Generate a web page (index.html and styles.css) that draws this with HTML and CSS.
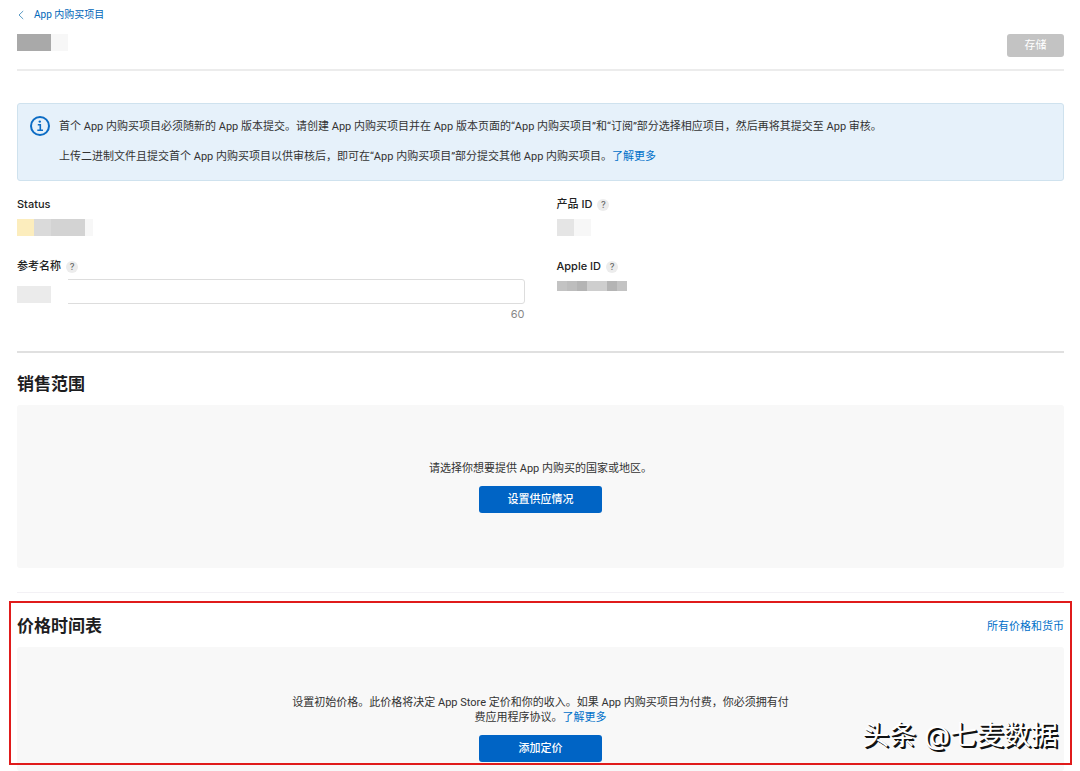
FILE: index.html
```html
<!DOCTYPE html>
<html lang="zh-CN">
  <head>
    <meta charset="UTF-8">
    <meta name="viewport" content="width=device-width, initial-scale=1">
    <title>App 内购买项目</title>
    <link rel="stylesheet" href="styles.css">
  </head>
  <body>
    <main>
      <header class="page-header">
        <a href="#" class="breadcrumb">
          <svg class="chevron" viewBox="0 0 6 10" aria-hidden="true"><path d="M5.2 1 L1 5 L5.2 9"/></svg>
          <span>App 内购买项目</span>
        </a>
        <div class="title-row">
          <div class="redacted"><i class="c-dark"></i><i class="c-dark"></i><i class="c-faint"></i></div>
          <button type="button" class="btn-save" disabled>存储</button>
        </div>
      </header>

      <div class="notice">
        <svg class="info-icon" viewBox="0 0 20 20" aria-hidden="true">
          <circle cx="10" cy="10" r="9"/>
          <circle class="dot" cx="9.8" cy="5.6" r="1.2"/>
          <path d="M7.8 8.8 H10.3 V14 M7.3 14.2 H13"/>
        </svg>
        <div class="notice-text">
          <p>首个 App 内购买项目必须随新的 App 版本提交。请创建 App 内购买项目并在 App 版本页面的“App 内购买项目”和“订阅”部分选择相应项目，然后再将其提交至 App 审核。</p>
          <p>上传二进制文件且提交首个 App 内购买项目以供审核后，即可在“App 内购买项目”部分提交其他 App 内购买项目。<a href="#">了解更多</a></p>
        </div>
      </div>

      <section class="details">
        <div class="field">
          <div class="label">Status</div>
          <div class="redacted"><i class="c-yellow"></i><i class="c-light"></i><i class="c-mid"></i><i class="c-mid"></i><i class="c-faint half"></i></div>
        </div>
        <div class="field">
          <div class="label">产品 ID <button type="button" class="help">?</button></div>
          <div class="redacted"><i class="c-pale"></i><i class="c-faint"></i></div>
        </div>
        <div class="field field-input">
          <div class="label"><label for="ref-name">参考名称</label> <button type="button" class="help">?</button></div>
          <div class="input-wrap">
            <input type="text" id="ref-name" maxlength="64">
            <div class="redacted input-redacted"><i class="c-soft"></i><i class="c-soft"></i><i class="c-white"></i></div>
          </div>
          <div class="counter">60</div>
        </div>
        <div class="field">
          <div class="label">Apple ID <button type="button" class="help">?</button></div>
          <div class="redacted small"><i class="c-gray"></i><i class="c-gray2"></i><i class="c-gray3"></i><i class="c-light2"></i><i class="c-light2"></i><i class="c-gray3"></i><i class="c-gray"></i></div>
        </div>
      </section>

      <section class="block">
        <div class="block-head">
          <h2>销售范围</h2>
        </div>
        <div class="panel">
          <p>请选择你想要提供 App 内购买的国家或地区。</p>
          <button type="button" class="btn-primary">设置供应情况</button>
        </div>
      </section>

      <section class="block pricing">
        <div class="block-head">
          <h2>价格时间表</h2>
          <a href="#">所有价格和货币</a>
        </div>
        <div class="panel">
          <p>设置初始价格。此价格将决定 App Store 定价和你的收入。如果 App 内购买项目为付费，你必须拥有付费应用程序协议。<a href="#">了解更多</a></p>
          <button type="button" class="btn-primary">添加定价</button>
        </div>
        <div class="highlight"></div>
        <div class="watermark">头条 @七麦数据</div>
      </section>
    </main>
  </body>
</html>
```
FILE: styles.css
```css
*{
  box-sizing: border-box;
}
html, body{
  margin: 0;
  padding: 0;
}
body{
  background: #fff;
  color: #333;
  font-family: Roboto, "Noto Sans CJK SC", sans-serif;
  font-size: 11px;
  line-height: 15px;
}
main{
  padding: 7px 16px 0 17px;
}
p, h2{
  margin: 0;
}
a{
  color: #0070c9;
  text-decoration: none;
}
button, input{
  font: inherit;
  margin: 0;
}

/* header */
.page-header{
  border-bottom: 2px solid #ececec;
}
.breadcrumb{
  display: flex;
  align-items: center;
  gap: 10px;
  padding-left: 1px;
  font-size: 10px;
  color: #0066b8;
}
.chevron{
  width: 6px;
  height: 10px;
  fill: none;
  stroke: #5b9bc4;
  stroke-width: 1;
}
.title-row{
  display: flex;
  justify-content: space-between;
  align-items: flex-start;
  padding: 12px 0;
}
.btn-save{
  width: 57px;
  height: 23px;
  border: 0;
  border-radius: 3px;
  background: #c3c3c3;
  color: #fff;
}

/* pixelated values */
.redacted{
  display: flex;
}
.redacted i{
  width: 17px;
  height: 17px;
}
.redacted .half{
  width: 8px;
}
.redacted.small i{
  width: 10px;
  height: 10px;
}
.c-dark{ background: #a9a9a9; }
.c-mid{ background: #d3d3d3; }
.c-light{ background: #dadada; }
.c-light2{ background: #cecece; }
.c-gray{ background: #c3c3c3; }
.c-gray2{ background: #bdbdbd; }
.c-gray3{ background: #b4b4b4; }
.c-pale{ background: #e5e5e5; }
.c-soft{ background: #ebebeb; }
.c-faint{ background: #f7f7f7; }
.c-white{ background: #fff; }
.c-yellow{ background: #fcedbd; }

/* notice */
.notice{
  display: flex;
  gap: 9px;
  margin-top: 32px;
  padding: 12px 12px 16px;
  border: 1px solid #cfe2ee;
  border-radius: 3px;
  background: #e6f1fa;
}
.info-icon{
  flex: none;
  width: 20px;
  height: 20px;
  fill: none;
  stroke: #0c6cc4;
  stroke-width: 2;
}
.info-icon .dot{
  fill: #0c6cc4;
  stroke: none;
}
.info-icon path{
  stroke-width: 1.6;
}
.notice-text{
  display: flex;
  flex-direction: column;
  gap: 15px;
  padding-top: 3px;
}

/* details */
.details{
  display: grid;
  grid-template-columns: 1fr 1fr;
  gap: 23px 32px;
  padding: 16px 0 29px;
  border-bottom: 2px solid #e0e0e0;
}
.label{
  display: flex;
  align-items: center;
  gap: 5px;
  margin-bottom: 7px;
  font-family: Inter, "Noto Sans CJK SC", sans-serif;
  font-weight: 500;
  color: #222;
}
.field-input .label{
  margin-bottom: 5px;
}
.help{
  width: 12px;
  height: 12px;
  padding: 0;
  border: 0;
  border-radius: 50%;
  background: #ececec;
  color: #666;
  font-size: 9px;
  line-height: 12px;
}
.input-wrap{
  position: relative;
}
.input-wrap input{
  display: block;
  width: 100%;
  height: 25px;
  padding: 0 8px;
  border: 1px solid #ddd;
  border-radius: 3px;
}
.input-redacted{
  position: absolute;
  top: 0;
  left: 0;
  padding: 7px 0 1px;
  background: #fff;
}
.counter{
  margin-top: 3px;
  text-align: right;
  font-family: Inter, sans-serif;
  color: #888;
}

/* sections */
.block{
  padding-bottom: 24px;
  border-bottom: 1px solid #f3f1f5;
}
.block-head{
  display: flex;
  justify-content: space-between;
  align-items: center;
  padding: 20px 0 10px;
}
.block-head h2{
  font-size: 17px;
  line-height: 22px;
  font-weight: 700;
  color: #1d1d1f;
}
.panel{
  display: flex;
  flex-direction: column;
  align-items: center;
  gap: 10px;
  padding: 56px 0 55px;
  border-radius: 3px;
  background: #f8f8f8;
  text-align: center;
}
.panel p{
  max-width: 506px;
}
.btn-primary{
  width: 123px;
  height: 27px;
  border: 0;
  border-radius: 3px;
  background: #0064c5;
  color: #fff;
  font-weight: 500;
}

/* marked area over the pricing section */
.pricing{
  position: relative;
  padding-bottom: 0;
  border-bottom: 0;
}
.pricing .block-head{
  padding-top: 22px;
}
.pricing .panel{
  padding: 48px 0 9px;
}
.highlight{
  position: absolute;
  top: 8px;
  left: -8px;
  right: -8px;
  bottom: 6px;
  border: 2px solid #e01b1b;
  pointer-events: none;
}
.watermark{
  position: absolute;
  top: 123px;
  right: 6px;
  font-family: Inter, "Noto Sans CJK SC", sans-serif;
  font-size: 27px;
  line-height: 40px;
  color: #fff;
  text-shadow: 1px 1px 0 #111, 2px 2px 0 #111;
  white-space: nowrap;
}
```
